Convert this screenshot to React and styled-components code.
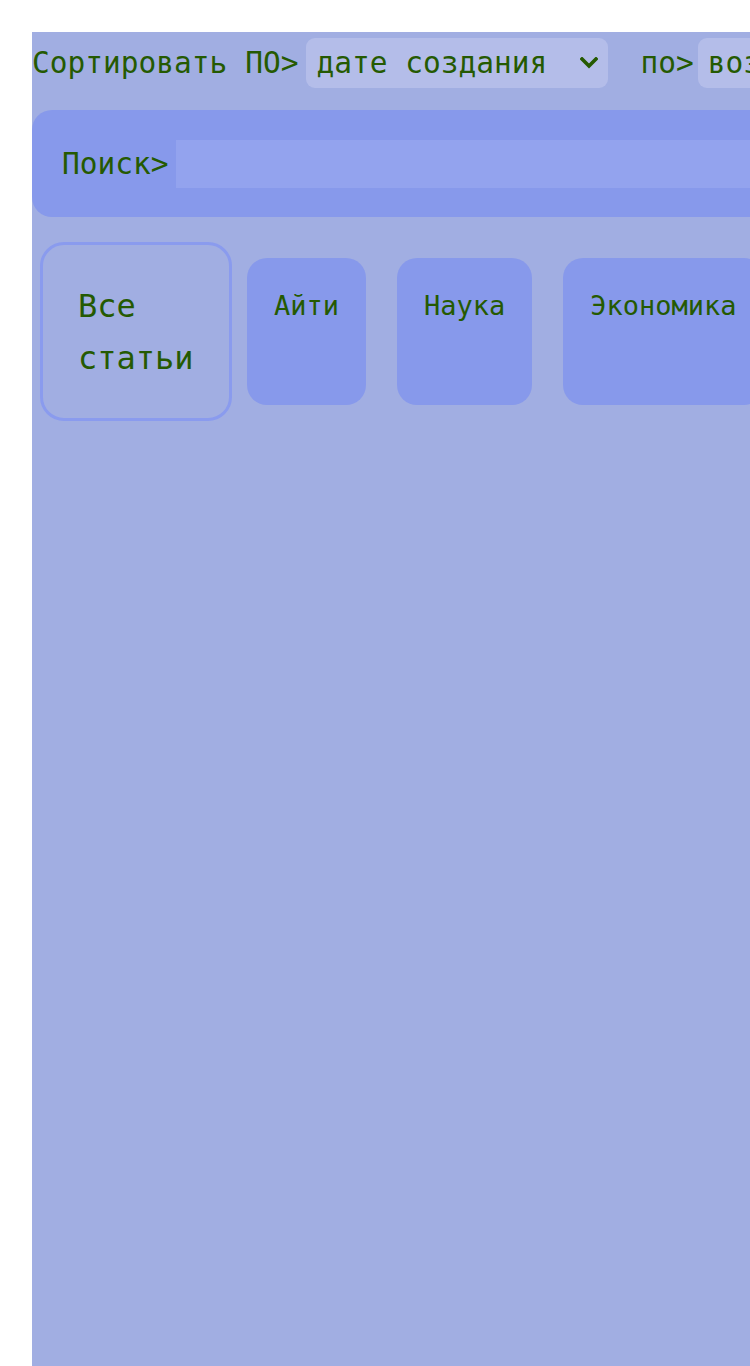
import React from "react";
import styled, { createGlobalStyle } from "styled-components";

const Global = createGlobalStyle`
  html, body {
    margin: 0;
    padding: 0;
    background: #ffffff;
    overflow: hidden;
  }
  body {
    font-family: "DejaVu Sans Mono", "Liberation Mono", monospace;
    color: #255a02;
  }
`;

const Page = styled.div`
  margin: 32px 0 0 32px;
  width: 1100px;
  min-height: 1400px;
  background: #a1aee2;
  display: flex;
  flex-direction: column;
`;

const SortRow = styled.div`
  display: flex;
  align-items: center;
  padding-top: 6px;
  height: 50px;
`;

const Label = styled.span`
  font-size: 29.5px;
  line-height: 36px;
  white-space: nowrap;
  margin-left: ${(p) => p.$offset || 0}px;
`;

const SelectBox = styled.div`
  display: flex;
  align-items: center;
  justify-content: space-between;
  box-sizing: border-box;
  width: ${(p) => p.$width}px;
  height: 50px;
  margin-left: ${(p) => p.$ml}px;
  padding: 0 10px 0 10px;
  border-radius: 9px;
  background: #b4bde9;
  font-size: 29.5px;
  white-space: nowrap;
  flex-shrink: 0;
`;

const Chevron = styled.svg`
  width: 18px;
  height: 12px;
  flex-shrink: 0;
`;

const SearchPanel = styled.div`
  margin-top: 22px;
  display: flex;
  align-items: center;
  padding: 30px 0 29px 30px;
  border-radius: 20px;
  background: #8799eb;
`;

const SearchLabel = styled.label`
  font-size: 29.5px;
  margin-right: 7px;
  white-space: nowrap;
`;

const SearchInput = styled.input`
  flex: 1;
  height: 48px;
  border: none;
  outline: none;
  padding: 0 10px;
  background: #93a3ee;
  font-family: inherit;
  font-size: 28px;
  color: inherit;
`;

const Tabs = styled.div`
  display: flex;
  align-items: center;
  margin-top: 25px;
  padding-left: 8px;
  gap: 15px;
`;

const ActiveTab = styled.button`
  box-sizing: border-box;
  width: 192px;
  height: 179px;
  padding: 33px 35px;
  border: 3px solid #8a9bee;
  border-radius: 24px;
  background: transparent;
  font-family: inherit;
  font-size: 32px;
  line-height: 52px;
  color: inherit;
  text-align: left;
  flex-shrink: 0;
`;

const Tab = styled.button`
  box-sizing: border-box;
  height: 147px;
  padding: 32px 27px;
  border: none;
  border-radius: 20px;
  background: #8799eb;
  font-family: inherit;
  font-size: 27px;
  line-height: 32px;
  color: inherit;
  text-align: left;
  align-self: center;
  white-space: nowrap;
  flex-shrink: 0;
  display: flex;
  align-items: flex-start;
  & + & {
    margin-left: 16px;
  }
`;

const ChevronDown = () => (
  <Chevron viewBox="0 0 18 12">
    <polyline
      points="2,2 9,9 16,2"
      fill="none"
      stroke="#255a02"
      strokeWidth="3.6"
      strokeLinecap="square"
    />
  </Chevron>
);

export default function App() {
  return (
    <>
      <Global />
      <Page>
        <SortRow>
          <Label>Сортировать ПО&gt;</Label>
          <SelectBox $width={302} $ml={8}>
            <span>дате создания</span>
            <ChevronDown />
          </SelectBox>
          <Label $offset={32}>по&gt;</Label>
          <SelectBox $width={320} $ml={4}>
            <span>возрастанию</span>
            <ChevronDown />
          </SelectBox>
        </SortRow>
        <SearchPanel>
          <SearchLabel htmlFor="search">Поиск&gt;</SearchLabel>
          <SearchInput id="search" type="text" />
        </SearchPanel>
        <Tabs>
          <ActiveTab>
            Все
            <br />
            статьи
          </ActiveTab>
          <Tab>Айти</Tab>
          <Tab>Наука</Tab>
          <Tab>Экономика</Tab>
        </Tabs>
      </Page>
    </>
  );
}
